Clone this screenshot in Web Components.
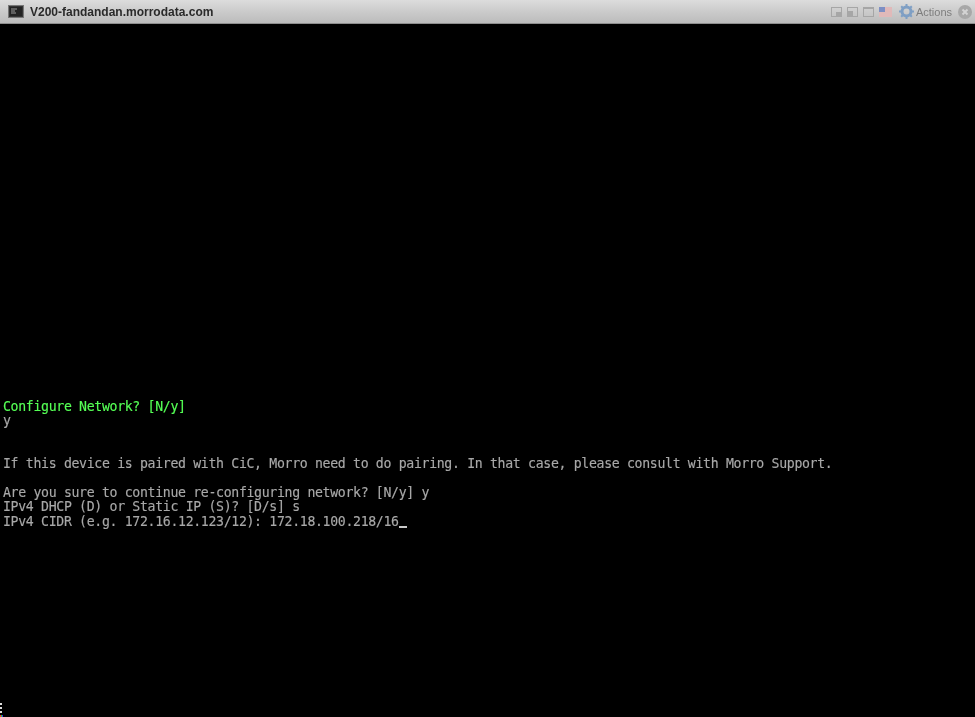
<!DOCTYPE html>
<html><head><meta charset="utf-8"><style>
html,body{margin:0;padding:0;background:#000;height:100%;overflow:hidden}
</style></head><body>
<console-window></console-window>
<script>
class TitleBar extends HTMLElement{constructor(){super();this.attachShadow({mode:'open'}).innerHTML=`<style>
:host{display:flex;align-items:center;height:24px;box-sizing:border-box;background:linear-gradient(#dcdcdc,#c8c8c8 60%,#bcbcbc);border-bottom:1px solid #8e8e8e;font-family:"Liberation Sans",Arial,sans-serif}
.l{display:flex;align-items:center;padding-left:8px;gap:6px;flex:1}
.t{font-size:12px;font-weight:bold;color:#2a2a2a;filter:blur(.3px)}
.r{display:flex;align-items:center;gap:5px;color:#7d7d7d;font-size:11px;padding-right:3px;filter:blur(.4px)}
svg{display:block}
.gear{margin-left:2px}
.a{margin-left:-3px;margin-right:1px}
</style><div class="l"><svg width="16" height="13" viewBox="0 0 16 13"><rect x=".5" y=".5" width="15" height="12" fill="#333" stroke="#777"/><rect x="2" y="2" width="12" height="9" fill="#222"/><path d="M3 4h6M3 6h4M3 8h5" stroke="#999"/></svg><span class="t">V200-fandandan.morrodata.com</span></div>
<div class="r">
<svg width="11" height="10" viewBox="0 0 11 10"><rect x=".5" y=".5" width="10" height="9" fill="none" stroke="#a6a6a6"/><rect x="5" y="5" width="5" height="4" fill="#a6a6a6"/></svg>
<svg width="11" height="10" viewBox="0 0 11 10"><rect x=".5" y=".5" width="10" height="9" fill="none" stroke="#a6a6a6"/><rect x="1" y="4" width="5" height="5" fill="#a6a6a6"/></svg>
<svg width="11" height="10" viewBox="0 0 11 10"><rect x=".5" y=".5" width="10" height="9" fill="none" stroke="#a6a6a6"/><rect x="1" y="1" width="9" height="1" fill="#a6a6a6"/></svg>
<svg width="13" height="10" viewBox="0 0 13 10"><rect width="13" height="10" fill="#e8e8e8"/><path d="M0 1h13M0 3h13M0 5h13M0 7h13M0 9h13" stroke="#d98a8a"/><rect width="6" height="5" fill="#7d8fc4"/></svg>
<svg class="gear" width="15" height="15" viewBox="0 0 15 15"><circle cx="7.5" cy="7.5" r="4.5" fill="none" stroke="#7f9fc4" stroke-width="3"/><path d="M7.5 0v3M7.5 12v3M0 7.5h3M12 7.5h3M2.2 2.2l2 2M10.8 10.8l2 2M2.2 12.8l2-2M10.8 4.2l2-2" stroke="#7f9fc4" stroke-width="2"/></svg>
<span class="a">Actions</span>
<svg width="14" height="14" viewBox="0 0 14 14"><circle cx="7" cy="7" r="7" fill="#a8a8a8"/><path d="M4.5 4.5l5 5M9.5 4.5l-5 5" stroke="#d4d4d4" stroke-width="2"/></svg>
</div>`}}
customElements.define('title-bar',TitleBar);
class TermLine extends HTMLElement{constructor(){super();this.attachShadow({mode:'open'}).innerHTML=`<style>
:host{display:block;height:14.4px;line-height:14.4px;white-space:pre;color:var(--fg,#a8a8a8)}
:host([green]){--fg:#55ff55}
</style><slot></slot>`}}
customElements.define('term-line',TermLine);
class ScreenGlitch extends HTMLElement{constructor(){super();this.attachShadow({mode:'open'}).innerHTML=`<style>
:host{display:block;position:absolute;left:0;bottom:0;width:4px;height:14px}
svg{display:block}
</style><svg width="4" height="14" viewBox="0 0 4 14"><path d="M0 0h2v2H0zM0 4h2v2H0zM0 8h2v2H0z" fill="#ddd"/><rect y="12" width="1" height="2" fill="#e33"/><rect x="1" y="12" width="1" height="2" fill="#3c3"/><rect x="2" y="12" width="1" height="2" fill="#33e"/></svg>`}}
customElements.define('screen-glitch',ScreenGlitch);
class ConsoleWindow extends HTMLElement{constructor(){super();this.attachShadow({mode:'open'}).innerHTML=`<style>
:host{display:flex;flex-direction:column;width:975px;height:717px;background:#000;overflow:hidden;position:relative}
.s{flex:1;padding:375.6px 0 0 3px;font:13.2px/14.4px "DejaVu Sans Mono","Liberation Mono",monospace;letter-spacing:-.33px;filter:blur(.3px);-webkit-text-stroke:.15px currentColor}
.c{display:inline-block;width:7.6px;height:2px;background:#c8c8c8;vertical-align:-2px;margin-left:.5px}
</style><title-bar></title-bar><div class="s">
<term-line green>Configure Network? [N/y]</term-line>
<term-line>y</term-line>
<term-line></term-line>
<term-line></term-line>
<term-line>If this device is paired with CiC, Morro need to do pairing. In that case, please consult with Morro Support.</term-line>
<term-line></term-line>
<term-line>Are you sure to continue re-configuring network? [N/y] y</term-line>
<term-line>IPv4 DHCP (D) or Static IP (S)? [D/s] s</term-line>
<term-line>IPv4 CIDR (e.g. 172.16.12.123/12): 172.18.100.218/16<span class="c"></span></term-line>
</div><screen-glitch></screen-glitch>`}}
customElements.define('console-window',ConsoleWindow);
</script></body></html>
